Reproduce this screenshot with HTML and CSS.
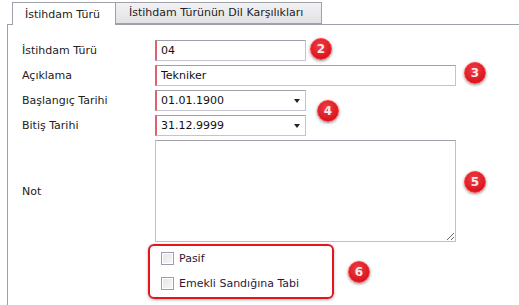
FILE: index.html
```html
<!DOCTYPE html>
<html lang="tr">
<head>
  <meta charset="UTF-8" />
  <title>İstihdam Türü</title>
  <link rel="stylesheet" href="styles.css">
</head>
<body>

  <div class="tabs">
    <div class="tab active">İstihdam Türü</div>
    <div class="tab second">İstihdam Türünün Dil Karşılıkları</div>
  </div>

  <div class="panel">
    <div class="form">
      <label>İstihdam Türü</label>
      <input class="field short" type="text" value="04" />

      <label>Açıklama</label>
      <input class="field long" type="text" value="Tekniker" />

      <label>Başlangıç Tarihi</label>
      <div class="field short combo">01.01.1900<span class="arrow"></span></div>

      <label>Bitiş Tarihi</label>
      <div class="field short combo">31.12.9999<span class="arrow"></span></div>

      <label class="note-label">Not</label>
      <textarea class="note"></textarea>

      <span></span>
      <div class="checks">
        <div class="check"><span class="box"></span>Pasif</div>
        <div class="check"><span class="box"></span>Emekli Sandığına Tabi</div>
      </div>
    </div>

    <span class="badge b2">2</span>
    <span class="badge b3">3</span>
    <span class="badge b4">4</span>
    <span class="badge b5">5</span>
    <span class="badge b6">6</span>
  </div>

</body>
</html>
```

FILE: styles.css
```css
body {
  margin: 0;
  font-family: 'DejaVu Sans', Verdana, sans-serif;
  font-size: 11px;
  color: #222;
  background: white;
}

.tabs {
  display: flex;
  align-items: flex-start;
  margin: 2px 0 0 7px;
  padding-left: 5px;
  border-bottom: 1px solid #a0a0aa;
  height: 22px;
}

.tab {
  box-sizing: border-box;
  border: 1px solid #a0a0aa;
  color: #222;
}

.tab.active {
  position: relative;
  width: 104px;
  height: 23px;
  line-height: 24px;
  padding-left: 12px;
  border-bottom: none;
  background: white;
}

.tab.second {
  width: 206px;
  height: 22px;
  line-height: 20px;
  padding-left: 13px;
  border-left: none;
  background: linear-gradient(#f2f2f4, #e2e2e6);
}

.panel {
  position: relative;
  margin-left: 7px;
  border-left: 1px solid #a0a0aa;
  height: 281px;
  padding: 15px 0 0 14px;
  box-sizing: border-box;
}

.form {
  display: grid;
  grid-template-columns: 133px auto;
  row-gap: 4px;
  align-items: center;
  justify-items: start;
}

.field {
  box-sizing: border-box;
  height: 21px;
  border: 1px solid #c4c4cc;
  border-top-color: #a0a0aa;
  border-left: 2px solid #e0606e;
  padding: 0 4px;
  font-family: inherit;
  font-size: 11px;
  color: #111;
  background: white;
  outline: none;
  margin: 0;
}

.short { width: 151px; }
.long { width: 301px; }

.combo {
  position: relative;
  line-height: 19px;
}

.arrow {
  position: absolute;
  right: 5px;
  top: 8px;
  border-left: 3.5px solid transparent;
  border-right: 3.5px solid transparent;
  border-top: 4px solid #222;
}

.note {
  box-sizing: border-box;
  width: 301px;
  height: 102px;
  border: 1px solid #c0c0c8;
  border-top-color: #a0a0aa;
  margin: 0;
  resize: both;
  outline: none;
}

.checks {
  margin: -2px 0 0 -7px;
  width: 186px;
  box-sizing: border-box;
  border: 2px solid #e8141c;
  border-radius: 6px;
  box-shadow: 0 1px 3px rgba(0, 0, 0, 0.3);
  padding: 6px 0 7px 11px;
  display: flex;
  flex-direction: column;
  gap: 12px;
}

.check {
  display: flex;
  align-items: center;
  gap: 5px;
  color: #2e1836;
  height: 13px;
}

.box {
  box-sizing: border-box;
  width: 13px;
  height: 13px;
  border: 1px solid #9c9caa;
  background: linear-gradient(135deg, #e4e4ea, #f8f8fa);
  box-shadow: inset 0 0 0 1px white;
}

.badge {
  position: absolute;
  width: 22px;
  height: 22px;
  box-sizing: border-box;
  border-radius: 50%;
  border: 1px solid #ff3a3a;
  background: radial-gradient(circle at 45% 35%, #ee4048, #d8121c 75%);
  box-shadow: 0 1px 3px rgba(0, 0, 0, 0.45);
  color: #fbe8ea;
  font-weight: bold;
  font-size: 12px;
  line-height: 20px;
  text-align: center;
}

.b2 { left: 302px; top: 13px; }
.b3 { left: 456px; top: 37px; }
.b4 { left: 309px; top: 75px; }
.b5 { left: 456px; top: 146px; }
.b6 { left: 340px; top: 236px; }
```
